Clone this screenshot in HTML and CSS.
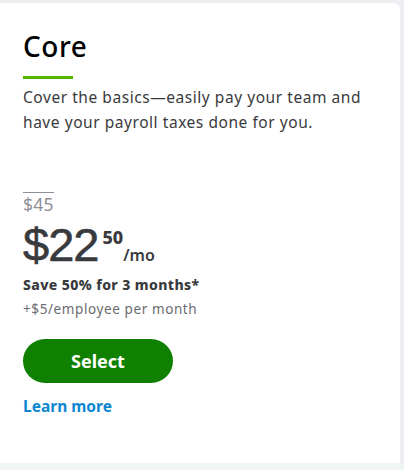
FILE: index.html
```html
<!DOCTYPE html>
<html>
<head>
<meta charset="utf-8">
<link rel="stylesheet" href="styles.css">
</head>
<body>
<div class="page">
  <div class="card">
    <h2 class="title">Core</h2>
    <div class="accent"></div>
    <p class="desc">Cover the basics—easily pay your team and have your payroll taxes done for you.</p>
    <div class="old-price">$45</div>
    <div class="price">
      <span class="amount">$22</span>
      <span class="cents">50</span>
      <span class="per">/mo</span>
    </div>
    <div class="save">Save 50% for 3 months*</div>
    <div class="extra">+$5/employee per month</div>
    <a class="btn" href="#">Select</a>
    <a class="learn" href="#">Learn more</a>
  </div>
  <div class="footer-band"></div>
</div>
</body>
</html>
```
FILE: styles.css
```css
html, body {
  margin: 0;
  padding: 0;
}
body {
  background: #eceef1;
  font-family: "Noto Sans", "Lato", sans-serif;
  color: #393a3d;
  width: 404px;
  height: 470px;
  overflow: hidden;
}
.page {
  display: flex;
  flex-direction: column;
  padding-top: 3px;
}
.card {
  background: #ffffff;
  width: 400px;
  height: 460px;
  box-sizing: border-box;
  border-radius: 0 6px 0 0;
  padding: 26px 23px 0 23px;
  display: flex;
  flex-direction: column;
  align-items: flex-start;
}
.title {
  margin: 0;
  font-size: 28px;
  font-weight: 500;
  color: #000;
  line-height: 34px;
  letter-spacing: 0.5px;
}
.accent {
  width: 50px;
  height: 3px;
  background: #53b700;
  margin-top: 13px;
}
.desc {
  margin: 6px 0 0 0;
  font-size: 15.5px;
  line-height: 25px;
  color: #393a3d;
  letter-spacing: 0.55px;
}
.old-price {
  margin-top: 57px;
  padding-top: 2px;
  font-size: 17.5px;
  line-height: 19px;
  color: #8d9096;
  border-top: 1px solid #8d9096;
  letter-spacing: 0.3px;
}
.price {
  display: flex;
  align-items: flex-start;
  margin-top: 13px;
}
.amount {
  font-family: "Liberation Sans", "Noto Sans", sans-serif;
  font-size: 47px;
  font-weight: 400;
  -webkit-text-stroke: 0.6px #393a3d;
  color: #393a3d;
  line-height: 36px;
  letter-spacing: -1px;
}
.cents {
  font-size: 18px;
  font-weight: 800;
  line-height: 18px;
  margin-left: 4px;
  margin-top: 1px;
}
.per {
  align-self: flex-end;
  font-size: 16px;
  font-weight: 600;
  line-height: 18px;
  margin-bottom: -1px;
}
.save {
  margin-top: 13px;
  font-size: 14px;
  font-weight: 800;
  color: #393a3d;
  line-height: 18px;
  letter-spacing: 0.4px;
}
.extra {
  margin-top: 6px;
  font-size: 13.5px;
  color: #6b6c72;
  line-height: 18px;
  letter-spacing: 0.6px;
}
.btn {
  margin-top: 21px;
  width: 150px;
  height: 44px;
  border-radius: 22px;
  background: #108000;
  color: #fff;
  font-size: 18px;
  font-weight: 700;
  text-decoration: none;
  display: flex;
  align-items: center;
  justify-content: center;
}
.learn {
  margin-top: 12px;
  font-size: 15.5px;
  font-weight: 700;
  color: #0d87d1;
  text-decoration: none;
}
.footer-band {
  background: #eef5f4;
  height: 20px;
}
```
